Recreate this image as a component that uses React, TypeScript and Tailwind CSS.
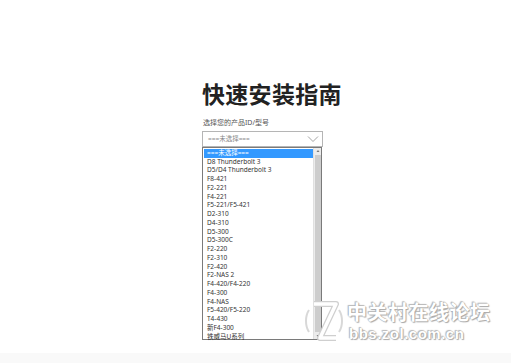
import React from 'react'

const models = [
  'D8 Thunderbolt 3',
  'D5/D4 Thunderbolt 3',
  'F8-421',
  'F2-221',
  'F4-221',
  'F5-221/F5-421',
  'D2-310',
  'D4-310',
  'D5-300',
  'D5-300C',
  'F2-220',
  'F2-310',
  'F2-420',
  'F2-NAS 2',
  'F4-420/F4-220',
  'F4-300',
  'F4-NAS',
  'F5-420/F5-220',
  'T4-430',
  '新F4-300',
  '铁威马U系列',
]

const font = { fontFamily: '"Noto Sans", "Noto Sans CJK SC", sans-serif' }
const wmShadow = '0 0 1px #999, 1px 1px 1px #aaa, -1px -1px 1px #bbb'

export default function App() {
  return (
    <div className="relative w-[511px] h-[363px] overflow-hidden bg-white" style={font}>
      <div className="pl-[202px] pt-[78px]">
        <h1 className="text-[23px] leading-[30px] font-bold text-[#222] tracking-[0.3px]" style={{ fontFamily: '"Noto Sans CJK SC", sans-serif' }}>
          快速安装指南
        </h1>
        <div className="mt-[10px] pl-px text-[7px] leading-[9px] text-[#555]">选择您的产品ID/型号</div>

        {/* select */}
        <div className="relative mt-[4px] w-[121px] h-[16px] border border-[#b5b5b5] flex items-center pl-[5px]">
          <span className="text-[6.5px] text-[#888]">===未选择===</span>
          <svg className="absolute right-[3px] top-[3px]" width="12" height="8" viewBox="0 0 12 8" fill="none" stroke="#9a9a9a" strokeWidth="0.9">
            <path d="M1 1.5 6 6.5 11 1.5" />
          </svg>
        </div>

        {/* dropdown list */}
        <div className="relative w-[120px] h-[193px] border border-[#7a7a7a] bg-white flex">
          <div className="flex-1 pt-px pl-px">
            <div className="h-[8.7px] bg-[#3399ff] text-white text-[6.5px] leading-[8.7px] pl-[3px]">===未选择===</div>
            {models.map((m) => (
              <div key={m} className="h-[8.75px] text-[6.5px] leading-[8.75px] pl-[3px] text-[#333] whitespace-nowrap">
                {m}
              </div>
            ))}
          </div>
          <div className="w-[8px] bg-[#ececec] flex flex-col items-center justify-between border-l border-[#e0e0e0]">
            <svg width="6" height="6" viewBox="0 0 6 6"><path d="M1.5 4 3 2 4.5 4Z" fill="#777" /></svg>
            <div className="flex-1 w-[6px] my-px bg-[#cdcdcd]" />
            <svg width="6" height="6" viewBox="0 0 6 6"><path d="M1.5 2 3 4 4.5 2Z" fill="#777" /></svg>
          </div>
        </div>
      </div>

      {/* watermark */}
      <div className="absolute left-[303px] top-[298px] flex items-center gap-[2px]">
        <svg width="42" height="46" viewBox="0 0 42 46" fill="none">
          <path d="M6 12c-4 6-4 16 0 22" stroke="#d8d8d8" strokeWidth="2" />
          <path d="M36 12c4 6 4 16 0 22" stroke="#d8d8d8" strokeWidth="2" />
          <path d="M11 6h22L17 40h16" stroke="#cfcfcf" strokeWidth="6" strokeLinejoin="round" />
          <path d="M11 6h22L17 40h16" stroke="#ffffff" strokeWidth="3.5" strokeLinejoin="round" />
        </svg>
        <div className="flex flex-col gap-[6px]">
          <span
            className="text-[20px] leading-[18px] font-bold text-white tracking-[0.5px]"
            style={{ fontFamily: '"Noto Sans CJK SC", sans-serif', textShadow: wmShadow }}
          >
            中关村在线论坛
          </span>
          <span
            className="text-[15px] leading-[13px] font-bold text-white tracking-[0.5px] pl-[2px]"
            style={{ fontFamily: '"Liberation Sans", sans-serif', textShadow: wmShadow }}
          >
            bbs.zol.com.cn
          </span>
        </div>
      </div>
      <div className="absolute left-0 right-0 bottom-0 h-[10px] bg-[#f9f9f9]" />
    </div>
  )
}
